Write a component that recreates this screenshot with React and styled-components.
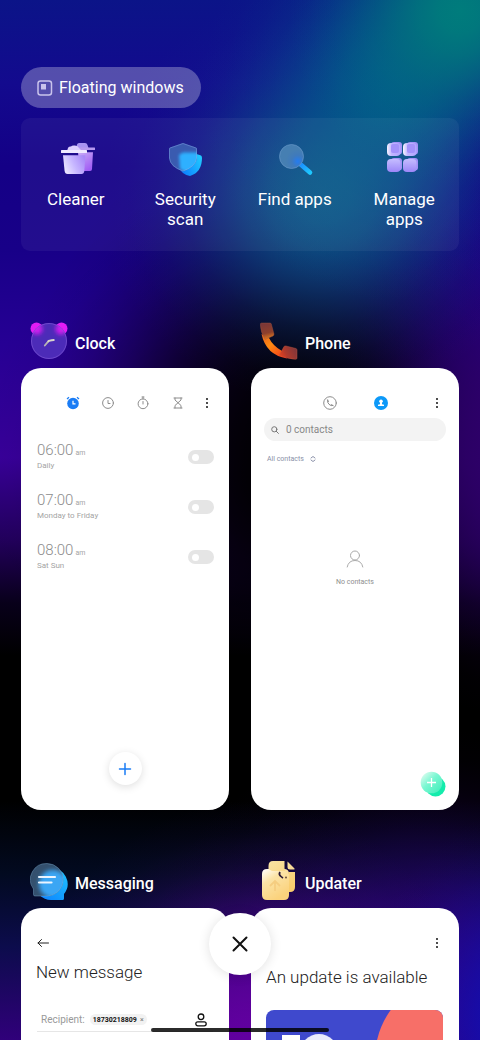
import React, { useState } from "react";
import styled, { createGlobalStyle } from "styled-components";

const GlobalStyle = createGlobalStyle`
  * {
    box-sizing: border-box;
  }
  body {
    margin: 0;
    background: #000;
    font-family: Roboto, "Liberation Sans", sans-serif;
  }
  button, input {
    font-family: inherit;
  }
`;

// soft colour spot for the wallpaper, fades out without a visible edge
const glow = (size, at, rgb, strength = 1) => {
  const stops = [1, 0.95, 0.82, 0.63, 0.42, 0.24, 0.11, 0.03, 0];
  const list = stops.map((s, i) => `rgba(${rgb}, ${(s * strength).toFixed(3)}) ${i * 12.5}%`);
  return `radial-gradient(ellipse ${size} at ${at}, ${list.join(", ")})`;
};

const wallpaper = [
  glow("36% 17%", "96% 1%", "0, 124, 124"),
  glow("38% 20%", "80% 9%", "0, 98, 138", 0.85),
  glow("46% 20%", "67% 19%", "12, 90, 136", 0.95),
  glow("36% 26%", "106% 43%", "46, 0, 104"),
  glow("68% 30%", "62% 46%", "0, 0, 0", 1),
  glow("54% 26%", "60% 38%", "0, 0, 0", 0.8),
  glow("32% 20%", "108% 98%", "18, 14, 176"),
  glow("48% 24%", "52% 101%", "98, 0, 160"),
  glow("60% 24%", "90% 94%", "50, 0, 130", 0.85),
  "linear-gradient(#0b1488 0%, #130a8e 8%, #140086 16%, #180088 24%, #260094 33%, #38009a 44%, #22005c 52%, #08001a 58%, #000 63%, #000 77%, #020a20 84%, #0c0c4c 91%, #30007a 100%)",
].join(", ");

const Screen = styled.main`
  position: relative;
  height: 100vh;
  overflow: hidden;
  padding: 67px 21px 0;
  background: ${wallpaper};
`;

const FloatingButton = styled.button`
  display: flex;
  align-items: center;
  gap: 6px;
  height: 41px;
  padding: 0 17px 0 16px;
  border: 0;
  border-radius: 21px;
  background: rgba(255, 255, 255, 0.28);
  color: #fff;
  font-size: 16px;
`;

const QuickPanel = styled.nav`
  display: grid;
  grid-template-columns: repeat(4, 1fr);
  margin-top: 10px;
  padding: 20px 0 22px;
  border-radius: 9px;
  background: rgba(255, 255, 255, 0.05);
`;

const QuickAction = styled.button`
  display: flex;
  flex-direction: column;
  align-items: center;
  gap: 11px;
  padding: 0 12px;
  border: 0;
  background: none;
  color: #fff;
  font-size: 17px;
  line-height: 20px;
`;

const AppGrid = styled.div`
  display: grid;
  grid-template-columns: 1fr 1fr;
  gap: 52px 22px;
  margin-top: 71px;
`;

const AppHeader = styled.header`
  display: flex;
  align-items: flex-end;
  gap: 7px;
  height: 38px;
  margin-bottom: 8px;
  padding-left: 9px;
`;

const AppTitle = styled.h2`
  margin: 0;
  color: #fff;
  font-size: 16px;
  font-weight: 500;
  line-height: 32px;
`;

const Card = styled.div`
  display: flex;
  flex-direction: column;
  aspect-ratio: 208 / 442;
  padding-top: 25px;
  overflow: hidden;
  border-radius: 20px;
  background: #fff;
`;

const TopRow = styled.div`
  display: flex;
  align-items: center;
  justify-content: ${(props) => (props.$between ? "space-between" : "flex-end")};
  height: 20px;
  padding: 0 10px 0 ${(props) => (props.$between ? "10px" : "0")};
`;

const TabButton = styled.button`
  display: flex;
  justify-content: center;
  width: ${(props) => props.$width || 35}px;
  padding: 0;
  border: 0;
  background: none;
  color: ${(props) => props.$color || "#8c8c8c"};
`;

const IconButton = styled(TabButton)`
  width: 24px;
  margin-left: ${(props) => props.$gap || 0}px;
  color: #222;
`;

const AlarmList = styled.ul`
  margin: 19px 0 0;
  padding: 0 15px 0 16px;
  list-style: none;
`;

const AlarmRow = styled.li`
  display: flex;
  align-items: center;
  justify-content: space-between;
  height: 50px;
  color: #a4a4a4;
`;

const AlarmLabel = styled.label`
  font-size: 8px;
  line-height: 10px;
`;

const AlarmTime = styled.div`
  color: #8c8c8c;
  font-size: 15px;
  font-weight: 300;
  line-height: 15px;

  small {
    margin-left: 2px;
    color: #a4a4a4;
    font-size: 7px;
    font-weight: 400;
  }
`;

const Switch = styled.input`
  display: flex;
  align-items: center;
  justify-content: ${(props) => (props.checked ? "flex-end" : "flex-start")};
  width: 26px;
  height: 14px;
  margin: 0;
  padding: 0 4px;
  appearance: none;
  border-radius: 7px;
  background: ${(props) => (props.checked ? "#1a7cf5" : "#e5e5e5")};

  &::before {
    content: "";
    width: 7px;
    height: 7px;
    border-radius: 50%;
    background: #fff;
  }
`;

const AddAlarm = styled.button`
  display: grid;
  place-items: center;
  width: 33px;
  height: 33px;
  margin: auto auto 25px;
  padding: 0;
  border: 0;
  border-radius: 50%;
  background: #fff;
  box-shadow: 0 2px 8px rgba(0, 0, 0, 0.13);
`;

const SearchBox = styled.label`
  display: flex;
  align-items: center;
  gap: 7px;
  height: 23px;
  margin: 5px 13px 0;
  padding: 0 7px;
  border-radius: 12px;
  background: #f3f3f3;
  color: #777;
`;

const SearchInput = styled.input`
  flex: 1;
  min-width: 0;
  padding: 0;
  border: 0;
  outline: 0;
  background: none;
  font-size: 10px;

  &::placeholder {
    color: #888;
    opacity: 1;
  }
`;

const FilterButton = styled.button`
  display: flex;
  align-items: center;
  align-self: flex-start;
  gap: 6px;
  height: 10px;
  margin: 13px 16px 0;
  padding: 0;
  border: 0;
  background: none;
  color: #8a90a8;
  font-size: 7px;
`;

const EmptyState = styled.div`
  display: flex;
  flex-direction: column;
  align-items: center;
  gap: 9px;
  margin-top: 86px;
  color: #8e8e8e;
  font-size: 7px;
  line-height: 10px;
`;

const AddContact = styled.button`
  align-self: flex-end;
  margin: auto 13px 13px;
  padding: 0;
  border: 0;
  background: none;
  line-height: 0;
`;

const CardHeading = styled.h3`
  margin: ${(props) => props.$top}px 15px 0;
  color: #222;
  font-size: 17px;
  font-weight: 300;
  line-height: 20px;
  white-space: nowrap;
`;

const RecipientRow = styled.div`
  display: flex;
  align-items: center;
  height: 24px;
  margin: 26px 16px 0;
  padding: 0 5px 0 4px;
  border-bottom: 1px solid #e6e6e6;
  color: #999;
  font-size: 10px;
`;

const Chip = styled.button`
  display: flex;
  align-items: center;
  gap: 3px;
  height: 11px;
  margin: 0 auto 0 5px;
  padding: 0 3px;
  border: 0;
  border-radius: 6px;
  background: #f2f2f2;
  color: #111;
  font-size: 7px;
  font-weight: 700;

  span {
    color: #777;
    font-weight: 400;
  }
`;

const Banner = styled.div`
  margin: 23px 16px 0 15px;
  overflow: hidden;
  border-radius: 8px;
  background: #3f49cd;
  line-height: 0;

  svg {
    width: 100%;
    height: auto;
  }
`;

const CloseButton = styled.button`
  position: absolute;
  bottom: 65px;
  left: 50%;
  display: grid;
  place-items: center;
  width: 62px;
  height: 62px;
  margin-left: -31px;
  padding: 0;
  border: 0;
  border-radius: 50%;
  background: #fff;
  box-shadow: 0 1px 12px rgba(0, 0, 0, 0.12);
`;

const HomeBar = styled.div`
  position: absolute;
  right: 0;
  bottom: 8px;
  left: 0;
  width: 37%;
  height: 4px;
  margin: 0 auto;
  border-radius: 2px;
  background: rgba(0, 0, 0, 0.83);
`;

const CleanerIcon = () => (
  <svg width="40" height="40" viewBox="0 0 40 40">
    <defs>
      <linearGradient id="binBack" x1="0" y1="0" x2="0.6" y2="1">
        <stop offset="0" stopColor="#c9aef5" />
        <stop offset="1" stopColor="#a25ff5" />
      </linearGradient>
      <linearGradient id="binFront" x1="0" y1="0.7" x2="1" y2="0.3">
        <stop offset="0" stopColor="#eeeaff" />
        <stop offset="0.5" stopColor="#c6b6ff" />
        <stop offset="1" stopColor="#a98af8" />
      </linearGradient>
    </defs>
    <path d="M20 10 L21 6.5 Q21.500 5 23 5 H29 Q31 5 31.5 7 L32.5 10Z" fill="#a893f2" />
    <rect x="22" y="9.5" width="17" height="2.6" rx="0.500" fill="#b79af0" />
    <path d="M22 14.300 H37 L36 31 Q36 33 34 33 H24Z" fill="url(#binBack)" />
    <path d="M11 13 L12 10 Q12.500 8 15 8.500 Q16 7 19 7.500 Q22 7.500 23 10 L26 13Z" fill="#dccfff" />
    <rect x="5" y="12" width="26" height="3" rx="0.500" fill="#efeaff" />
    <path d="M7 17.3 H29.500 L28.300 33 Q28 36 25.500 36 H11.500 Q9 36 8.600 33Z" fill="url(#binFront)" />
  </svg>
);

const ShieldIcon = () => (
  <svg width="40" height="40" viewBox="0 0 40 40">
    <defs>
      <linearGradient id="shieldBack" x1="0" y1="0.8" x2="1" y2="0.3">
        <stop offset="0" stopColor="#0a78ff" />
        <stop offset="1" stopColor="#20c8ff" />
      </linearGradient>
      <filter id="shieldBlur" x="-30%" y="-30%" width="160%" height="160%">
        <feGaussianBlur stdDeviation="1.800" />
      </filter>
      <clipPath id="shieldClip">
        <path d="M18 5 L31 9.500 Q32 10 32 11 V20 Q31 29 18 33.500 Q5 29 4 20 V11 Q4 10 5 9.500Z" />
      </clipPath>
    </defs>
    <path d="M14 20 L30 15.500 L36 17.500 Q37 18 37 20 Q37 34 25 38 Q17 37 14 29Z" fill="url(#shieldBack)" />
    <g clipPath="url(#shieldClip)">
      <rect width="40" height="40" fill="#3a5bb0" />
      <path d="M14 17 L18 14.500 H34 V30 L24 36 L15 31Z" fill="#2fb0ff" filter="url(#shieldBlur)" />
    </g>
    <path d="M18 5.500 L31 10 Q31.500 10 31.500 11 V20 Q31 28.500 18 33 Q5 28.500 4.500 20 V11 Q4.500 10 5 10Z" fill="none" stroke="#8fb0ea" strokeOpacity="0.4" />
  </svg>
);

const FindIcon = () => (
  <svg width="40" height="40" viewBox="0 0 40 40">
    <defs>
      <linearGradient id="handle" x1="0" y1="0" x2="1" y2="1">
        <stop offset="0" stopColor="#1b86ff" />
        <stop offset="1" stopColor="#1ec8ff" />
      </linearGradient>
      <radialGradient id="lens" cx="0.76" cy="0.7" r="0.5">
        <stop offset="0" stopColor="#247cf0" />
        <stop offset="0.5" stopColor="#3f7abc" />
        <stop offset="1" stopColor="#467fb2" />
      </radialGradient>
    </defs>
    <path d="M24 25 L35 34.500" stroke="url(#handle)" strokeWidth="4.600" strokeLinecap="round" />
    <circle cx="16.500" cy="18.500" r="12" fill="url(#lens)" stroke="#6d9bcc" strokeOpacity="0.6" />
  </svg>
);

const tiles = [
  { x: 3, y: 4 },
  { x: 19, y: 4 },
  { x: 3, y: 20 },
  { x: 19, y: 20 },
];

const ManageIcon = () => (
  <svg width="40" height="40" viewBox="0 0 40 40">
    <defs>
      <linearGradient id="tileTop">
        <stop offset="0" stopColor="#f6f4ff" />
        <stop offset="0.35" stopColor="#c0b5ff" />
        <stop offset="1" stopColor="#b3a4ff" />
      </linearGradient>
      <linearGradient id="tileLow" x1="0" y1="0" x2="0" y2="1">
        <stop offset="0" stopColor="#c5bdff" />
        <stop offset="1" stopColor="#9c86f8" />
      </linearGradient>
    </defs>
    {tiles.map((tile) => (
      <g key={`${tile.x}-${tile.y}`}>
        <rect x={tile.x + 4} y={tile.y} width="11" height="12.500" rx="3" fill="#a293f8" />
        <rect x={tile.x} y={tile.y + 1} width="13.500" height="13" rx="4" fill={tile.y < 10 ? "url(#tileTop)" : "url(#tileLow)"} />
        {tile.y < 10 && <rect x={tile.x + 4} y={tile.y + 2} width="8" height="9" rx="2" fill="#a392fb" />}
      </g>
    ))}
  </svg>
);

const ClockIcon = () => (
  <svg width="38" height="38" viewBox="0 0 38 38">
    <defs>
      <filter id="earBlur" x="-50%" y="-50%" width="200%" height="200%">
        <feGaussianBlur stdDeviation="2" />
      </filter>
      <clipPath id="faceClip">
        <circle cx="19" cy="19" r="18" />
      </clipPath>
    </defs>
    <circle cx="6.500" cy="6.500" r="6" fill="#e31cf5" />
    <circle cx="31.500" cy="6.500" r="6" fill="#e31cf5" />
    <g clipPath="url(#faceClip)">
      <rect width="38" height="38" fill="#4c2bb8" />
      <circle cx="7" cy="7" r="5.500" fill="#d01cf0" filter="url(#earBlur)" />
      <circle cx="31" cy="7" r="5.500" fill="#d01cf0" filter="url(#earBlur)" />
    </g>
    <circle cx="19" cy="19" r="17.500" fill="none" stroke="#8f63e0" strokeOpacity="0.5" />
    <path d="M14.800 23.500 L18.300 19.300" stroke="#b9b4b4" strokeWidth="1.800" strokeLinecap="round" />
    <path d="M18.300 19.300 Q19 18.500 23.800 18" stroke="#d8d4cc" strokeWidth="1.800" strokeLinecap="round" fill="none" />
  </svg>
);

const PhoneIcon = () => (
  <svg width="38" height="38" viewBox="0 0 38 38">
    <defs>
      <linearGradient id="handset" x1="0" y1="0" x2="1" y2="1">
        <stop offset="0" stopColor="#e8601c" />
        <stop offset="0.4" stopColor="#ff8a12" />
        <stop offset="1" stopColor="#f02a1c" />
      </linearGradient>
      <linearGradient id="earpiece" x1="0.4" y1="0" x2="0.6" y2="1">
        <stop offset="0" stopColor="#7a3638" />
        <stop offset="0.6" stopColor="#8e402c" />
        <stop offset="1" stopColor="#e8801c" />
      </linearGradient>
      <linearGradient id="mouthpiece" x1="1" y1="0.4" x2="0" y2="0.8">
        <stop offset="0" stopColor="#80363a" />
        <stop offset="0.6" stopColor="#b03a2c" />
        <stop offset="1" stopColor="#f0401c" />
      </linearGradient>
    </defs>
    <path d="M1.500 12 L9 16 Q13 24 22 29 L27 36.500 Q6 33 1.500 12Z" fill="url(#handset)" />
    <path d="M1.500 1 H10 Q11 1 11.300 2 L14 12 Q14 13.500 13 14 L5 17.500 Q0.500 10 0.300 2.500 Q0.300 1 1.500 1Z" fill="url(#earpiece)" stroke="#a3543e" strokeOpacity="0.5" strokeWidth="0.800" />
    <path d="M24 24.500 Q25 23.700 26 24 L36 26.500 Q37 27 37 28 V36 Q37 37.300 35.500 37.300 Q27 37 19.500 33Z" fill="url(#mouthpiece)" stroke="#b5533e" strokeOpacity="0.6" strokeWidth="0.800" />
  </svg>
);

const MessagingIcon = () => (
  <svg width="38" height="38" viewBox="0 0 38 38">
    <defs>
      <linearGradient id="bubbleBack" x1="0" y1="1" x2="1" y2="0">
        <stop offset="0" stopColor="#0a7cff" />
        <stop offset="1" stopColor="#20c4ff" />
      </linearGradient>
      <filter id="bubbleBlur" x="-30%" y="-30%" width="160%" height="160%">
        <feGaussianBlur stdDeviation="2" />
      </filter>
      <clipPath id="bubbleClip">
        <path d="M17 1.500 A16 16 0 1 1 17 34 H5 Q3.500 34 3.500 32.500 V27 A16 16 0 0 1 17 1.500Z" />
      </clipPath>
    </defs>
    <path d="M21 6 A16 16 0 0 1 34 32 V36.500 Q34 38 32.500 38 H21 A16 16 0 0 1 21 6Z" fill="url(#bubbleBack)" />
    <g clipPath="url(#bubbleClip)">
      <rect width="38" height="38" fill="#34506e" />
      <circle cx="23" cy="22" r="14" fill="#3aa6f4" filter="url(#bubbleBlur)" />
    </g>
    <path d="M17 1.500 A16 16 0 1 1 17 34 H5 Q3.500 34 3.500 32.500 V27 A16 16 0 0 1 17 1.500Z" fill="none" stroke="#83b4d8" strokeOpacity="0.4" />
    <path d="M9 15 H25" stroke="#eaf4ff" strokeWidth="2.200" strokeLinecap="round" />
    <path d="M9 20.500 H21.500" stroke="#eaf4ff" strokeWidth="2.200" strokeLinecap="round" />
  </svg>
);

const UpdaterIcon = () => (
  <svg width="38" height="40" viewBox="0 0 38 40">
    <defs>
      <linearGradient id="sheetBack" x1="0" y1="0" x2="0.6" y2="1">
        <stop offset="0" stopColor="#f8e3a4" />
        <stop offset="1" stopColor="#f9cd6e" />
      </linearGradient>
      <linearGradient id="sheetFront" x1="0" y1="0.1" x2="0.5" y2="1">
        <stop offset="0" stopColor="#fffaf0" />
        <stop offset="0.35" stopColor="#fbe3a6" />
        <stop offset="1" stopColor="#fbd27c" />
      </linearGradient>
    </defs>
    <path d="M7 9 H24 Q29 9 29 14 V35 Q29 40 24 40 H7 Q2 40 2 35 V14 Q2 9 7 9Z" fill="url(#sheetFront)" />
    <path d="M13 1 H24.500 V8 Q24.500 12 28.500 12 H35 V27 Q35 32 30 32 H29 V14 Q29 12 26 11 H12 L8.500 9 V6 Q8.500 1 13 1Z" fill="url(#sheetBack)" />
    <path d="M27.500 1.500 L34.500 8.500 Q35 9.500 34 9.500 H30 Q27.500 9.500 27.500 7Z" fill="#f8dc98" />
    <path d="M20 12 Q18.500 14.500 20.500 16 Q21.500 17 23 18" stroke="#2b1a34" strokeWidth="1.700" fill="none" />
    <circle cx="26" cy="17.500" r="0.900" fill="#5b4232" />
    <path d="M15 31 V21.500 M10 26 L15 21 L20 26" stroke="#f5cd80" strokeWidth="1.800" fill="none" />
  </svg>
);

const Dots = () => (
  <svg width="4" height="12" viewBox="0 0 4 12" fill="currentColor">
    <circle cx="2" cy="2" r="1.100" />
    <circle cx="2" cy="6" r="1.100" />
    <circle cx="2" cy="10" r="1.100" />
  </svg>
);

const Outline = ({ size = 14, box = 14, width = 1, children, ...rest }) => (
  <svg
    width={size}
    height={size}
    viewBox={`0 0 ${box} ${box}`}
    fill="none"
    stroke="currentColor"
    strokeWidth={width}
    strokeLinecap="round"
    strokeLinejoin="round"
    {...rest}
  >
    {children}
  </svg>
);

const quickActions = [
  { label: "Cleaner", Icon: CleanerIcon },
  { label: "Security scan", Icon: ShieldIcon },
  { label: "Find apps", Icon: FindIcon },
  { label: "Manage apps", Icon: ManageIcon },
];

const alarms = [
  { id: "six", time: "06:00", repeat: "Daily" },
  { id: "seven", time: "07:00", repeat: "Monday to Friday" },
  { id: "eight", time: "08:00", repeat: "Sat Sun" },
];

function RecentApp({ title, Icon, children }) {
  return (
    <section>
      <AppHeader>
        <Icon />
        <AppTitle>{title}</AppTitle>
      </AppHeader>
      <Card>{children}</Card>
    </section>
  );
}

function ClockPreview() {
  const [active, setActive] = useState({});

  return (
    <>
      <TopRow>
        <TabButton $color="#1a7cf5" aria-label="Alarm">
          <svg width="14" height="14" viewBox="0 0 14 14">
            <circle cx="7" cy="7.500" r="5.800" fill="currentColor" />
            <path d="M1 3 L3 1.300 M13 3 L11 1.300" stroke="currentColor" strokeWidth="1.300" />
            <path d="M7 4.800 V7.800 H9.500" stroke="#fff" strokeWidth="1.200" fill="none" />
          </svg>
        </TabButton>
        <TabButton aria-label="World clock">
          <Outline>
            <circle cx="7" cy="7" r="5.400" />
            <path d="M7 4.500 V7.500 H9" />
          </Outline>
        </TabButton>
        <TabButton aria-label="Stopwatch">
          <Outline>
            <circle cx="7" cy="7.800" r="4.900" />
            <path d="M7 5.500 V8 M6 1 H8 M7 1 V3" />
          </Outline>
        </TabButton>
        <TabButton aria-label="Timer">
          <Outline>
            <path d="M3 2 H11 M3 12 H11 M4 2 V4 L10 9.500 V12 M10 2 V4 L4 9.500 V12" />
          </Outline>
        </TabButton>
        <IconButton aria-label="More options">
          <Dots />
        </IconButton>
      </TopRow>
      <AlarmList>
        {alarms.map((alarm) => (
          <AlarmRow key={alarm.id}>
            <AlarmLabel htmlFor={alarm.id}>
              <AlarmTime>
                {alarm.time}
                <small>am</small>
              </AlarmTime>
              {alarm.repeat}
            </AlarmLabel>
            <Switch
              id={alarm.id}
              type="checkbox"
              checked={Boolean(active[alarm.id])}
              onChange={(e) => setActive({ ...active, [alarm.id]: e.target.checked })}
            />
          </AlarmRow>
        ))}
      </AlarmList>
      <AddAlarm aria-label="Add alarm">
        <Outline width={1.5} color="#1a7cf5">
          <path d="M7 1.500 V12.500 M1.500 7 H12.500" />
        </Outline>
      </AddAlarm>
    </>
  );
}

function PhonePreview() {
  return (
    <>
      <TopRow>
        <TabButton $width={51} aria-label="Calls">
          <Outline>
            <circle cx="7" cy="7" r="6.300" />
            <path d="M4.600 4 Q4 6.500 6 8.300 Q8 10.300 10 9.600 M4.600 4 L5.400 5.600 M10 9.600 L8.600 8.600" />
          </Outline>
        </TabButton>
        <TabButton $width={51} $color="#0d99f8" aria-label="Contacts">
          <svg width="14" height="14" viewBox="0 0 14 14">
            <circle cx="7" cy="7" r="7" fill="currentColor" />
            <circle cx="7" cy="5.300" r="1.800" fill="#fff" />
            <path d="M6 6 H8 V8.300 L10 8.800 V10 H4 V8.800 L6 8.300Z" fill="#fff" />
          </svg>
        </TabButton>
        <IconButton $gap={19} aria-label="More options">
          <Dots />
        </IconButton>
      </TopRow>
      <SearchBox>
        <Outline size={8} box={8}>
          <circle cx="3.300" cy="3.300" r="2.600" />
          <path d="M5.300 5.300 L7.400 7.400" />
        </Outline>
        <SearchInput aria-label="Search contacts" placeholder="0 contacts" />
      </SearchBox>
      <FilterButton>
        All contacts
        <Outline size={6} box={6}>
          <path d="M1 2 L3 0.500 L5 2 M1 4 L3 5.500 L5 4" />
        </Outline>
      </FilterButton>
      <EmptyState>
        <Outline size={18} box={18} color="#aaa">
          <circle cx="9" cy="5.500" r="4.500" />
          <path d="M1.200 17 Q2.500 10.500 9 10.500 Q15.500 10.500 16.800 17" />
        </Outline>
        No contacts
      </EmptyState>
      <AddContact aria-label="Add contact">
        <svg width="26" height="26" viewBox="0 0 26 26">
          <defs>
            <linearGradient id="mintDisc" x1="0" y1="0" x2="1" y2="1">
              <stop offset="0.100" stopColor="#d8fcee" />
              <stop offset="0.450" stopColor="#7af7d2" />
              <stop offset="1" stopColor="#3ceeb8" />
            </linearGradient>
          </defs>
          <circle cx="15.500" cy="15.500" r="10" fill="#14ecac" />
          <circle cx="11.500" cy="11.500" r="10.800" fill="url(#mintDisc)" />
          <path d="M11.500 7 V16 M7 11.500 H16" stroke="#fff" strokeWidth="1.300" />
        </svg>
      </AddContact>
    </>
  );
}

function MessagingPreview() {
  return (
    <>
      <TopRow $between>
        <IconButton aria-label="Back">
          <Outline>
            <path d="M2 7 H12.500 M5.500 3.500 L2 7 L5.500 10.500" />
          </Outline>
        </IconButton>
      </TopRow>
      <CardHeading $top={9}>New message</CardHeading>
      <RecipientRow>
        Recipient:
        <Chip>
          18730218809 <span>×</span>
        </Chip>
        <Outline width={1.3} color="#111">
          <circle cx="7" cy="3.800" r="2.800" />
          <rect x="1.800" y="8.800" width="10.400" height="4" rx="2" />
        </Outline>
      </RecipientRow>
    </>
  );
}

function UpdaterPreview() {
  return (
    <>
      <TopRow>
        <IconButton aria-label="More options">
          <Dots />
        </IconButton>
      </TopRow>
      <CardHeading $top={14}>An update is available</CardHeading>
      <Banner>
        <svg viewBox="0 0 177 100">
          <circle cx="190" cy="48" r="81" fill="#f76f68" />
          <rect x="16" y="25" width="18" height="60" fill="#fff" />
          <circle cx="53" cy="43" r="19" fill="#e9eafb" />
        </svg>
      </Banner>
    </>
  );
}

function App() {
  return (
    <>
      <GlobalStyle />
      <Screen>
        <FloatingButton>
          <Outline size={16} box={16} width={1.5} color="#c9c3ec">
            <rect x="1" y="1" width="13.500" height="14" rx="2.500" />
            <rect x="4" y="4" width="5" height="5.500" fill="currentColor" stroke="none" />
          </Outline>
          Floating windows
        </FloatingButton>
        <QuickPanel>
          {quickActions.map(({ label, Icon }) => (
            <QuickAction key={label}>
              <Icon />
              {label}
            </QuickAction>
          ))}
        </QuickPanel>
        <AppGrid>
          <RecentApp title="Clock" Icon={ClockIcon}>
            <ClockPreview />
          </RecentApp>
          <RecentApp title="Phone" Icon={PhoneIcon}>
            <PhonePreview />
          </RecentApp>
          <RecentApp title="Messaging" Icon={MessagingIcon}>
            <MessagingPreview />
          </RecentApp>
          <RecentApp title="Updater" Icon={UpdaterIcon}>
            <UpdaterPreview />
          </RecentApp>
        </AppGrid>
        <CloseButton aria-label="Close all">
          <Outline size={16} box={16} width={2} color="#111">
            <path d="M1.500 1.500 L14.500 14.500 M14.500 1.500 L1.500 14.500" />
          </Outline>
        </CloseButton>
        <HomeBar />
      </Screen>
    </>
  );
}

export default App;
